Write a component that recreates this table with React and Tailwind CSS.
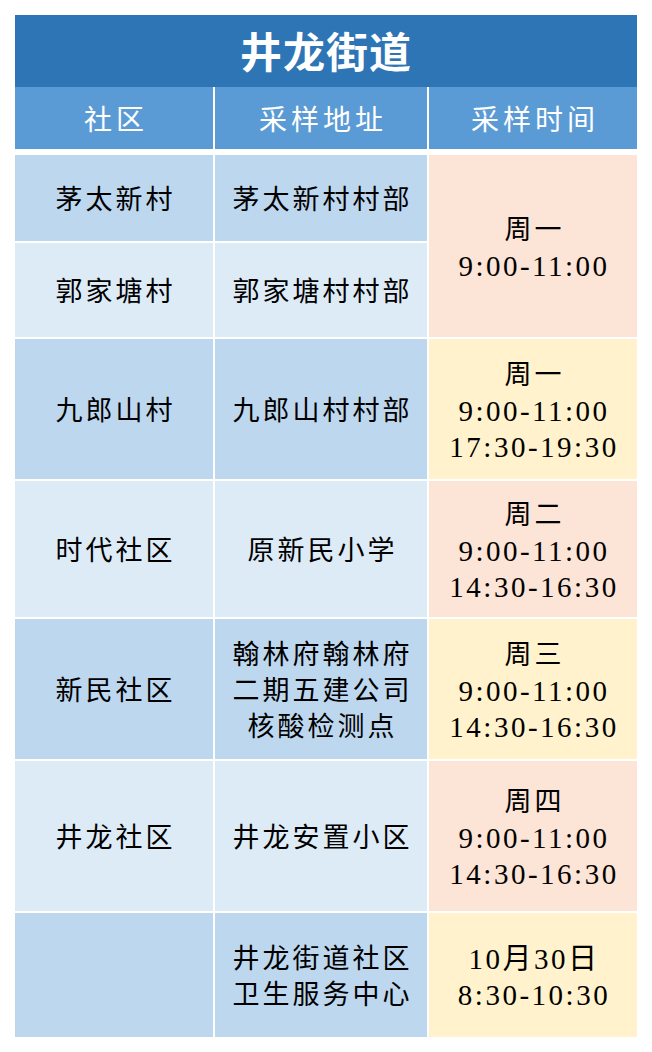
import React from "react";

const FONT = { fontFamily: '"Liberation Serif", "Noto Sans CJK SC", serif' };

function Cell({ bg, lines, className = "" }) {
  return (
    <div className={`flex flex-col items-center justify-center pt-[3px] text-center text-black ${bg} ${className}`}>
      {lines.map((l, i) => {
        const isNum = /\d/.test(l);
        return (
          <div
            key={i}
            className={
              isNum
                ? "text-[29px] leading-[36px] tracking-[2.5px] pl-[2px] whitespace-nowrap"
                : "text-[27px] leading-[36px] tracking-[3px] pl-[3px] whitespace-nowrap"
            }
          >
            {l}
          </div>
        );
      })}
    </div>
  );
}

const DARK = "bg-[#BDD7EE]";
const LIGHT = "bg-[#DDEBF7]";
const ORANGE = "bg-[#FCE4D6]";
const YELLOW = "bg-[#FFF2CC]";

export default function App() {
  return (
    <div className="min-h-[1052px] w-[652px] bg-white pt-[15px] pl-[15px]" style={FONT}>
      <div className="w-[622px]">
        <div className="flex h-[72px] items-center justify-center bg-[#2E75B6] text-white">
          <span className="text-[42px] font-bold leading-none tracking-[1px] pb-[2px]" style={{ fontFamily: '"Noto Sans CJK SC", sans-serif' }}>
            井龙街道
          </span>
        </div>
        <div className="grid h-[62px] grid-cols-[198px_212px_208px] gap-x-[2px] bg-white">
          {["社区", "采样地址", "采样时间"].map((t) => (
            <div key={t} className="flex items-center justify-center bg-[#5B9BD5] pt-[6px] text-white">
              <span className="text-[28px] leading-none tracking-[4px] pl-[4px]">{t}</span>
            </div>
          ))}
        </div>
        <div className="mt-[6px] grid grid-cols-[198px_212px_208px] grid-rows-[86px_94px_140px_136px_140px_150px_124px] gap-[2px]">
          <Cell bg={DARK} lines={["茅太新村"]} />
          <Cell bg={DARK} lines={["茅太新村村部"]} />
          <Cell bg={ORANGE} className="row-span-2" lines={["周一", "9:00-11:00"]} />
          <Cell bg={LIGHT} lines={["郭家塘村"]} />
          <Cell bg={LIGHT} lines={["郭家塘村村部"]} />

          <Cell bg={DARK} lines={["九郎山村"]} />
          <Cell bg={DARK} lines={["九郎山村村部"]} />
          <Cell bg={YELLOW} lines={["周一", "9:00-11:00", "17:30-19:30"]} />

          <Cell bg={LIGHT} lines={["时代社区"]} />
          <Cell bg={LIGHT} lines={["原新民小学"]} />
          <Cell bg={ORANGE} lines={["周二", "9:00-11:00", "14:30-16:30"]} />

          <Cell bg={DARK} lines={["新民社区"]} />
          <Cell bg={DARK} lines={["翰林府翰林府", "二期五建公司", "核酸检测点"]} />
          <Cell bg={YELLOW} lines={["周三", "9:00-11:00", "14:30-16:30"]} />

          <Cell bg={LIGHT} lines={["井龙社区"]} />
          <Cell bg={LIGHT} lines={["井龙安置小区"]} />
          <Cell bg={ORANGE} lines={["周四", "9:00-11:00", "14:30-16:30"]} />

          <Cell bg={DARK} lines={[]} />
          <Cell bg={DARK} lines={["井龙街道社区", "卫生服务中心"]} />
          <Cell bg={YELLOW} lines={["10月30日", "8:30-10:30"]} />
        </div>
      </div>
    </div>
  );
}
